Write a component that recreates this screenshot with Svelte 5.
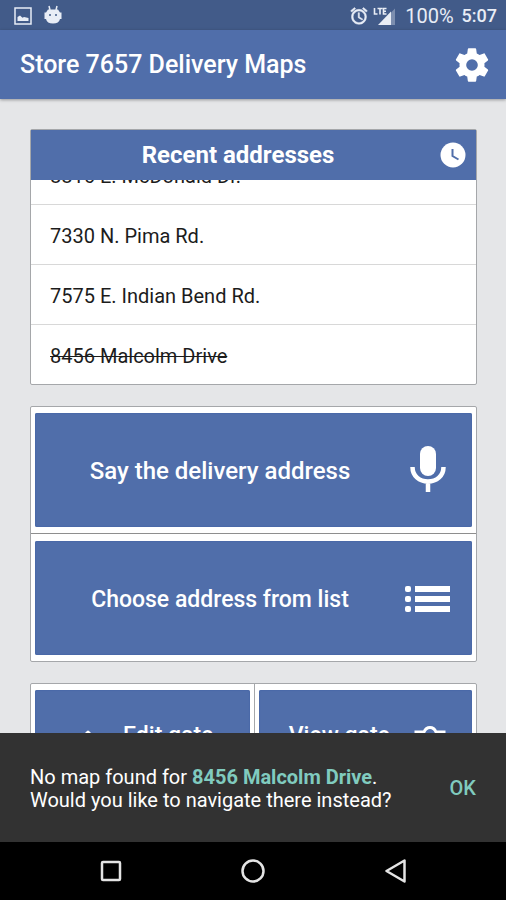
<script lang="ts">
  type Address = { text: string; missing?: boolean }

  const recent: Address[] = [
    { text: '8816 E. McDonald Dr.' },
    { text: '7330 N. Pima Rd.' },
    { text: '7575 E. Indian Bend Rd.' },
    { text: '8456 Malcolm Drive', missing: true },
  ]

  let unmatched = $state('8456 Malcolm Drive')
</script>

<div class="screen">
  <div class="status">
    <svg width="18" height="18" viewBox="0 0 18 18" fill="none"><rect x="1" y="1" width="16" height="16" stroke="currentColor" stroke-width="1.5" /><path d="M3.5 14V10l2.500-1.500 2.500 2.200 1.500-.7 4.500 1V14z" fill="currentColor" /></svg>
    <svg class="droid" width="18" height="20" viewBox="0 0 18 20"><path d="M5 1l1 4M13 1l-1 4" stroke="currentColor" stroke-width="1.5" /><path d="M4 4.500h10l2 3h1.500v6.500h-1.500c-.7 3-3 4.500-7 4.500s-6.300-1.500-7-4.500H.5V7.500H2z" fill="currentColor" /><circle cx="6" cy="10" r="1" fill="#425b89" /><circle cx="12" cy="10" r="1" fill="#425b89" /></svg>
    <span class="spacer"></span>
    <svg width="20" height="20" viewBox="0 0 24 24" fill="currentColor" stroke="currentColor" stroke-width=".6"><path d="M22 5.720l-4.600-3.860-1.290 1.530 4.600 3.860L22 5.720zM7.880 3.390L6.600 1.860 2 5.710l1.290 1.530 4.590-3.850zM12.500 8H11v6l4.750 2.850.75-1.230-4-2.370V8zM12 4c-4.970 0-9 4.030-9 9s4.020 9 9 9a9 9 0 000-18zm0 16c-3.870 0-7-3.130-7-7s3.130-7 7-7 7 3.130 7 7-3.130 7-7 7z" /></svg>
    <svg class="signal" width="24" height="20" viewBox="0 0 24 20"><path d="M22 2.500V19H6z" fill="currentColor" opacity=".35" /><path d="M18 5.500V19H5z" fill="currentColor" /><path d="M1.500 2v6h3M4.500 2.500h5M7 2.500V8.500M13.500 2.500H10.500V8h3M10.500 5.200h2.500" fill="none" stroke="currentColor" stroke-width="1.600" /></svg>
    <span class="battery">100%</span>
    <span class="time">5:07</span>
  </div>

  <header>
    <h1>Store 7657 Delivery Maps</h1>
    <button class="plain" aria-label="Settings">
      <svg width="40" height="40" viewBox="0 0 24 24" fill="currentColor"><path d="M19.430 12.980c.04-.32.070-.64.070-.98s-.03-.66-.07-.98l2.110-1.650c.19-.15.240-.42.120-.64l-2-3.460c-.12-.22-.39-.3-.61-.22l-2.490 1c-.52-.4-1.080-.73-1.690-.98l-.38-2.650C14.460 2.180 14.250 2 14 2h-4c-.25 0-.46.180-.49.420l-.38 2.650c-.61.250-1.170.590-1.690.980l-2.490-1c-.23-.09-.49 0-.61.220l-2 3.460c-.13.220-.07.490.120.640l2.110 1.650c-.04.320-.07.650-.07.980s.030.660.070.980l-2.110 1.650c-.19.150-.24.420-.12.640l2 3.460c.12.220.390.300.610.220l2.490-1c.52.400 1.080.730 1.690.980l.38 2.650c.03.240.240.420.490.420h4c.25 0 .46-.18.490-.42l.38-2.650c.61-.25 1.170-.59 1.690-.98l2.490 1c.23.090.490 0 .61-.22l2-3.460c.12-.22.070-.49-.12-.64l-2.110-1.650zM12 15.500a3.500 3.500 0 110-7 3.500 3.500 0 010 7z" /></svg>
    </button>
  </header>

  <main>
    <section class="card">
      <div class="card-head">
        <h2>Recent addresses</h2>
        <svg width="26" height="26" viewBox="0 0 26 26"><circle cx="13" cy="13" r="12.500" fill="currentColor" /><path d="M12.500 7v7l6 3.500" fill="none" stroke="#506eaa" stroke-width="2" /></svg>
      </div>
      <!-- Held at its end, so the newest address is always in view. -->
      <ul>
        {#each recent as a (a.text)}
          <li class:missing={a.missing}>{a.text}</li>
        {/each}
      </ul>
    </section>

    <section class="card">
      <div class="cell">
        <button class="action">
          <span>Say the delivery address</span>
          <svg width="46" height="50" viewBox="0 0 46 50"><rect x="15" y="0" width="16" height="30" rx="8" fill="currentColor" /><path d="M7.500 21c0 9 7 14.500 15.500 14.500s15.500-5.500 15.500-14.500M23 35.500v10.500" fill="none" stroke="currentColor" stroke-width="4.500" /></svg>
        </button>
      </div>
      <div class="cell">
        <button class="action long">
          <span>Choose address from list</span>
          <svg width="46" height="26" viewBox="0 0 46 26" fill="currentColor"><path d="M10 0h35v6H10zM10 10h35v6H10zM10 20h35v6H10z" /><rect y="0" width="6" height="6" rx="2" /><rect y="10" width="6" height="6" rx="2" /><rect y="20" width="6" height="6" rx="2" /></svg>
        </button>
      </div>
    </section>

    <section class="card pair">
      <div class="cell">
        <button class="action small">
          <svg width="32" height="32" viewBox="0 0 32 32" fill="currentColor"><path d="M26 12q1-1 2 0l3 3q1 1 0 2l-2 2-5-5zM23 15l5 5-12 12h-5v-5z" /></svg>
          <span>Edit gate</span>
        </button>
      </div>
      <div class="cell">
        <button class="action small">
          <span>View gate</span>
          <svg width="32" height="32" viewBox="0 0 32 32"><path d="M2 13h8c1.500-3.500 3-4.500 6-4.500s4.500 1 6 4.500h8v16H2z" fill="none" stroke="currentColor" stroke-width="3" /><circle cx="16" cy="20" r="5" fill="currentColor" /></svg>
        </button>
      </div>
    </section>
  </main>

  <div class="snackbar" role="status">
    <p>No map found for <b>{unmatched}</b>.<br />Would you like to navigate there instead?</p>
    <button class="plain ok">OK</button>
  </div>

  <nav>
    <button class="plain" aria-label="Overview">
      <svg width="24" height="24" viewBox="0 0 24 24"><rect x="3" y="3" width="18" height="18" rx="1" /></svg>
    </button>
    <button class="plain" aria-label="Home">
      <svg width="24" height="24" viewBox="0 0 24 24"><circle cx="12" cy="12" r="10.500" /></svg>
    </button>
    <button class="plain" aria-label="Back">
      <svg width="24" height="24" viewBox="0 0 24 24"><path d="M21.500 1.500v21L3.500 12z" stroke-linejoin="round" /></svg>
    </button>
  </nav>
</div>

<style>
  :global(body) {
    margin: 0;
  }
  .screen {
    display: flex;
    flex-direction: column;
    height: 100vh;
    background: #e5e6e8;
    color: #fff;
    font-family: Roboto, sans-serif;
  }
  svg {
    flex: none;
    display: block;
  }
  h1,
  h2,
  p {
    margin: 0;
  }
  button {
    font: inherit;
    color: inherit;
    border: 0;
    cursor: pointer;
  }
  .plain {
    display: flex;
    align-items: center;
    justify-content: center;
    padding: 0;
    background: none;
  }

  .status {
    flex: none;
    display: flex;
    align-items: center;
    box-sizing: border-box;
    height: 30px;
    padding: 1px 9px 0 14px;
    background: #425b89;
    color: #e8edf6;
    font-size: 20px;
  }
  .droid {
    margin-left: 12px;
    margin-bottom: 2px;
  }
  .spacer {
    flex: 1;
  }
  .signal {
    margin-left: 4px;
  }
  .battery {
    margin-left: 8px;
  }
  .time {
    margin-left: 8px;
    font-size: 18px;
    font-weight: 500;
  }

  header {
    position: relative;
    flex: none;
    display: flex;
    align-items: center;
    justify-content: space-between;
    box-sizing: border-box;
    height: 69px;
    padding: 0 14px 0 20px;
    background: #506eaa;
    box-shadow: 0 1px 3px rgba(0, 0, 0, 0.35);
  }
  h1 {
    font-size: 25px;
    font-weight: 500;
  }

  main {
    flex: 1;
    min-height: 0;
    overflow: hidden;
    display: flex;
    flex-direction: column;
    gap: 21px;
    padding: 30px 29px 0 30px;
    box-sizing: border-box;
  }
  .card {
    flex: none;
    background: #fff;
    border: 1px solid #a5a7aa;
    border-radius: 2px;
  }
  .card-head {
    display: flex;
    align-items: center;
    height: 50px;
    padding: 0 10px 0 5px;
    background: #506eaa;
  }
  h2 {
    flex: 1;
    text-align: center;
    font-size: 24px;
    font-weight: 700;
  }
  ul {
    display: flex;
    flex-direction: column;
    justify-content: flex-end;
    height: 204px;
    margin: 0;
    padding: 0;
    overflow: hidden;
    list-style: none;
  }
  li {
    flex: none;
    box-sizing: border-box;
    height: 60px;
    padding: 0 19px;
    border-top: 1px solid #d8d8d8;
    color: #1c1c1c;
    font-size: 20px;
    line-height: 62px;
  }
  .missing {
    text-decoration: line-through;
    text-decoration-thickness: 1px;
  }

  .cell {
    padding: 6px 4px;
  }
  .cell + .cell {
    padding-top: 7px;
    border-top: 1px solid #8e8e8e;
  }
  .action {
    display: flex;
    align-items: center;
    gap: 21px;
    width: 100%;
    height: 114px;
    padding: 2px 21px 0;
    background: #506eaa;
    border-radius: 2px;
    box-shadow: inset 0 0 1px 1px #4a69a8;
    font-size: 24px;
    font-weight: 500;
  }
  .action span {
    flex: 1;
    text-align: center;
    white-space: nowrap;
  }
  .long {
    font-size: 23px;
  }
  .pair {
    display: grid;
    grid-template-columns: 1fr 1fr;
  }
  .pair .cell + .cell {
    padding-top: 6px;
    border-top: 0;
    border-left: 1px solid #a5a7aa;
  }
  .small {
    height: 90px;
    gap: 20px;
    padding: 0 26px;
    font-size: 23px;
  }

  .snackbar {
    flex: none;
    display: flex;
    align-items: center;
    justify-content: space-between;
    box-sizing: border-box;
    height: 109px;
    padding: 2px 30px 0;
    background: #323232;
    font-size: 20px;
    line-height: 23px;
  }
  .snackbar b,
  .ok {
    color: #80cbbf;
  }
  .ok {
    font-weight: 500;
  }

  nav {
    flex: none;
    display: flex;
    justify-content: center;
    height: 58px;
    background: #000;
  }
  nav button {
    width: 28%;
  }
  nav svg {
    fill: none;
    stroke: #e4e4e4;
    stroke-width: 2.5;
  }
</style>
